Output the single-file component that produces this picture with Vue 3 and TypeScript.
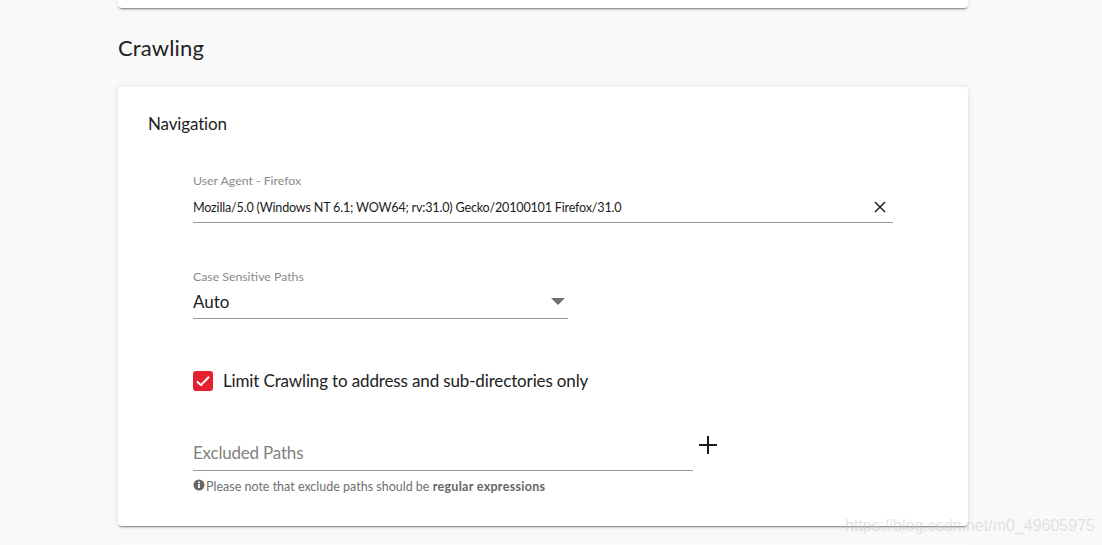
<script setup lang="ts">
const note = 'Please note that exclude paths should be '
</script>

<template>
  <div class="page">
    <div class="card stub"></div>
    <h2 class="section-title">Crawling</h2>
    <section class="card main">
      <h3 class="card-title">Navigation</h3>
      <div class="form">
        <div class="field agent">
          <label class="label">User Agent - Firefox</label>
          <div class="control agent-control">
            <span class="agent-value">Mozilla/5.0 (Windows NT 6.1; WOW64; rv:31.0) Gecko/20100101 Firefox/31.0</span>
            <svg class="clear" width="12" height="12" viewBox="0 0 12 12"><path d="M1 1L11 11M11 1L1 11" stroke="#222" stroke-width="1.5" fill="none" /></svg>
          </div>
        </div>
        <div class="field case">
          <label class="label">Case Sensitive Paths</label>
          <div class="control select-control">
            <span class="select-value">Auto</span>
            <span class="caret"></span>
          </div>
        </div>
        <div class="check-row">
          <span class="checkbox">
            <svg width="20" height="20" viewBox="0 0 20 20"><path d="M4 10.4L8 14.2L16 5.8" stroke="#fff" stroke-width="2" fill="none" /></svg>
          </span>
          <span class="check-label">Limit Crawling to address and sub-directories only</span>
        </div>
        <div class="excluded">
          <div class="excluded-main">
            <div class="control excluded-control">Excluded Paths</div>
            <p class="note">
              <svg class="info" width="12" height="12" viewBox="0 0 12 12"><circle cx="6" cy="6" r="5.5" fill="#666" /><rect x="5.1" y="5" width="1.8" height="4" fill="#fff" /><rect x="5.1" y="2.6" width="1.8" height="1.6" fill="#fff" /></svg>
              <span>{{ note }}<b>regular expressions</b></span>
            </p>
          </div>
          <svg class="plus" width="18" height="18" viewBox="0 0 18 18"><path d="M9 0V18M0 9H18" stroke="#1c1c1c" stroke-width="2" fill="none" /></svg>
        </div>
      </div>
    </section>
    <div class="next-card"></div>
    <span class="watermark">https://blog.csdn.net/m0_49605975</span>
  </div>
</template>

<style>
html, body { margin: 0; background: #f9f9f9; overflow: hidden; }
</style>

<style scoped>
.page {
  position: relative;
  width: 1102px;
  height: 545px;
  overflow: hidden;
  box-sizing: border-box;
  padding: 0 134px 0 118px;
  background: #f9f9f9;
  font-family: Lato, "Noto Sans", sans-serif;
  color: #222;
}
.card {
  background: #fff;
  border-radius: 4px;
  box-shadow: 0 2px 2px -1px rgba(0, 0, 0, 0.5), 0 0 7px rgba(0, 0, 0, 0.09);
}
.stub { height: 8px; border-radius: 0 0 4px 4px; }
.section-title {
  margin: 25px 0 25px;
  font-size: 22px;
  line-height: 29px;
  font-weight: 400;
  letter-spacing: 0.15px;
}
.main {
  height: 439px;
  box-sizing: border-box;
  padding: 26px 30px 0;
}
.card-title {
  margin: 0;
  font-size: 17px;
  line-height: 22px;
  font-weight: 400;
  letter-spacing: -0.15px;
}
.form {
  padding: 0 45px;
  margin-top: 38px;
}
.label {
  display: block;
  font-size: 12.3px;
  line-height: 16px;
  color: #8a8a8a;
}
.control { border-bottom: 1px solid #949494; box-sizing: border-box; }
.agent { width: 700px; }
.agent-control {
  display: flex;
  align-items: center;
  justify-content: space-between;
  height: 34px;
  padding: 3px 7px 0 0;
  font-size: 12.6px;
  letter-spacing: -0.2px;
}
.clear { flex: none; }
.case { width: 375px; margin-top: 46px; }
.select-control {
  display: flex;
  align-items: center;
  justify-content: space-between;
  height: 34px;
  padding: 0 3px 0 0;
  font-size: 17px;
}
.caret {
  width: 0;
  height: 0;
  border-left: 7px solid transparent;
  border-right: 7px solid transparent;
  border-top: 7px solid #6f6f6f;
}
.check-row {
  display: flex;
  align-items: center;
  gap: 10px;
  margin-top: 52px;
  height: 20px;
}
.checkbox {
  width: 20px;
  height: 20px;
  border-radius: 3px;
  background: #e3202e;
  display: block;
}
.checkbox svg { display: block; }
.check-label {
  font-size: 17px;
  letter-spacing: -0.14px;
  line-height: 20px;
}
.excluded { display: flex; align-items: flex-start; gap: 6px; margin-top: 46px; }
.excluded-main { width: 500px; }
.excluded-control {
  height: 34px;
  line-height: 32px;
  font-size: 17px;
  letter-spacing: -0.2px;
  color: #85807c;
}
.note {
  display: flex;
  margin: 8px 0 0;
  font-size: 12.5px;
  line-height: 15px;
  color: #707070;
  white-space: nowrap;
}
.note b { font-weight: 700; color: #666; letter-spacing: 0.3px; }
.info { flex: none; margin-right: 1px; }
.plus { margin: -1px 0 0 0; flex: none; }
.next-card {
  height: 6px;
  margin-top: 17px;
  background: #fbfbfb;
}
.watermark {
  position: absolute;
  left: 845px;
  top: 517px;
  font-family: "Liberation Sans", sans-serif;
  font-size: 16px;
  color: rgba(200, 200, 200, 0.5);
  white-space: nowrap;
}
</style>
